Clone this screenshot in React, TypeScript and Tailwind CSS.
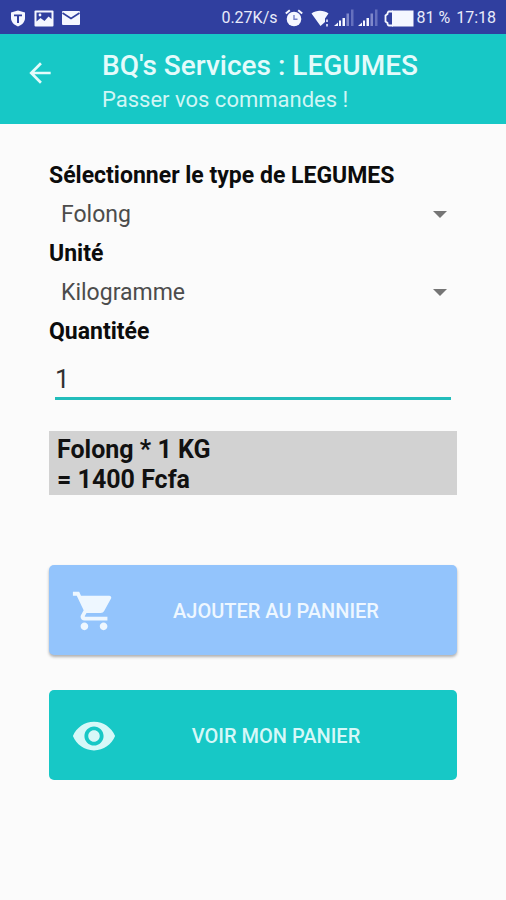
import { useState } from "react";
import type { ReactNode } from "react";

function ShieldIcon() {
  return (
    <svg viewBox="0 0 16 17" className="h-[17px] w-4" aria-hidden="true">
      <path d="M8 0.5L15 2.5V8C15 12 12 15 8 16.5C4 15 1 12 1 8V2.5Z" fill="#f5f7ff" />
      <path d="M4 4.5H12V6.3H9V13H7V6.3H4Z" fill="#303f9f" />
    </svg>
  );
}

function PictureIcon() {
  return (
    <svg viewBox="0 0 20 17" className="h-[17px] w-5" aria-hidden="true">
      <rect x="0.5" y="0.5" width="19" height="16" rx="1" fill="#f5f7ff" />
      <path d="M2.5 2.5H17.5V9L14.5 6.5L10.5 11L6.5 8L2.5 11.5Z" fill="#303f9f" />
      <circle cx="6" cy="5" r="1.4" fill="#f5f7ff" />
    </svg>
  );
}

function MailIcon() {
  return (
    <svg viewBox="0 0 18 14" className="h-3.5 w-[18px]" aria-hidden="true">
      <rect width="18" height="14" rx="1" fill="#f5f7ff" />
      <path d="M0.5 2L9 7.5L17.5 2" fill="none" stroke="#303f9f" strokeWidth="1.6" />
    </svg>
  );
}

function AlarmIcon() {
  return (
    <svg viewBox="0 0 18 18" className="size-[18px]" aria-hidden="true">
      <circle cx="9" cy="10" r="7.3" fill="#f5f7ff" />
      <path d="M0.8 4.6L4.8 1.2M17.2 4.6L13.2 1.2" stroke="#f5f7ff" strokeWidth="2" />
      <path d="M9 6V10.3H12.5" fill="none" stroke="#7682c8" strokeWidth="1.4" />
    </svg>
  );
}

function WifiIcon() {
  return (
    <svg viewBox="0 0 19 17" className="h-[17px] w-[19px]" aria-hidden="true">
      <path d="M0.5 3.5C5 -0.3 13 -0.3 17.5 3.5L14 8.5V12L9.5 16Z" fill="#f5f7ff" />
      <path d="M16 9.5V12M16 14V16.5" stroke="#c3c9ec" strokeWidth="2" />
    </svg>
  );
}

function SignalIcon() {
  return (
    <svg viewBox="0 0 20 18" className="h-[18px] w-5" aria-hidden="true">
      <path d="M0 17L4 13.5V17Z" fill="#f5f7ff" />
      <rect x="5" y="11.5" width="2" height="5.5" fill="#f5f7ff" />
      <rect x="8.5" y="9" width="2.5" height="8" fill="#f5f7ff" />
      <rect x="12.5" y="4.5" width="2.5" height="12.5" fill="#8089cb" />
      <rect x="17" y="0.5" width="2.5" height="16.5" fill="#6570be" />
    </svg>
  );
}

function BatteryIcon() {
  return (
    <svg viewBox="0 0 30 17" className="h-[17px] w-[30px]" aria-hidden="true">
      <path d="M9 1.5H5C4 1.5 3.5 3 3.5 4L1.5 5.5V11.5L3.5 13C3.5 14.5 4 15.5 5 15.5H9" fill="none" stroke="#f5f7ff" strokeWidth="1.8" />
      <rect x="8" y="0.5" width="21.5" height="16" fill="#f5f7ff" />
    </svg>
  );
}

function StatusBar() {
  return (
    <div className="flex h-[34px] items-center justify-between bg-[#303f9f] px-[10px] pt-0.5 text-base text-[#e8ebfa]">
      <div className="flex items-center gap-2">
        <ShieldIcon />
        <PictureIcon />
        <MailIcon />
      </div>
      <div className="flex items-center gap-[6px]">
        <div className="flex items-center gap-2">
          <span>0.27K/s</span>
          <AlarmIcon />
        </div>
        <div className="ml-0.5 flex items-center gap-1">
          <WifiIcon />
          <SignalIcon />
          <SignalIcon />
        </div>
        <div className="flex items-center gap-0.5">
          <BatteryIcon />
          <span>81 %</span>
        </div>
        <span>17:18</span>
      </div>
    </div>
  );
}

function Header() {
  return (
    <header className="flex h-[90px] bg-[#17c8c6]">
      <button type="button" aria-label="Retour" className="ml-6 flex h-[78px] w-8 items-center justify-center">
        <svg viewBox="0 0 24 24" className="size-8" fill="#e4fbfb" aria-hidden="true">
          <path d="M20 11H7.83l5.59-5.59L12 4l-8 8 8 8 1.41-1.41L7.83 13H20v-2z" />
        </svg>
      </button>
      <div className="ml-[46px] pt-[15px]">
        <h1 className="text-[28px] leading-[34px] font-medium text-[#e4fbfb]">BQ's Services : LEGUMES</h1>
        <p className="text-[22px] leading-[34px] text-[#d0f6f5]">Passer vos commandes !</p>
      </div>
    </header>
  );
}

function Label({ id, children }: { id: string; children: ReactNode }) {
  return (
    <label htmlFor={id} className="block text-[23px] leading-7 font-bold text-[#0c0c0c]">
      {children}
    </label>
  );
}

function Dropdown({ id, options }: { id: string; options: string[] }) {
  return (
    <div className="relative">
      <select id={id} className="block h-[50px] w-full appearance-none bg-transparent pr-10 pl-3 text-[23px] text-[#4c4c4c]">
        {options.map((option) => (
          <option key={option}>{option}</option>
        ))}
      </select>
      <svg viewBox="0 0 14 7" className="pointer-events-none absolute top-[21px] right-[10px] h-[7px] w-3.5" fill="#757575" aria-hidden="true">
        <path d="M0 0H14L7 7Z" />
      </svg>
    </div>
  );
}

function ActionButton({ icon, className, children }: { icon: string; className: string; children: ReactNode }) {
  return (
    <button type="button" className={`flex h-[90px] w-full items-center rounded-[5px] px-[22px] pt-0.5 text-xl font-medium ${className}`}>
      <svg viewBox="0 0 24 24" className="size-[46px] shrink-0 fill-current" aria-hidden="true">
        <path d={icon} />
      </svg>
      <span className="flex-1 text-center">{children}</span>
    </button>
  );
}

const CART =
  "M7 18c-1.1 0-1.99.9-1.99 2S5.9 22 7 22s2-.9 2-2-.9-2-2-2zM1 2v2h2l3.6 7.59-1.35 2.45c-.16.28-.25.61-.25.96 0 1.1.9 2 2 2h12v-2H7.42c-.14 0-.25-.11-.25-.25l.03-.12.9-1.63h7.45c.75 0 1.41-.41 1.75-1.03l3.58-6.49c.08-.14.12-.31.12-.48 0-.55-.45-1-1-1H5.21l-.94-2H1zm16 16c-1.1 0-1.99.9-1.99 2s.89 2 1.99 2 2-.9 2-2-.9-2-2-2z";
const EYE =
  "M12 4.5C7 4.5 2.73 7.61 1 12c1.73 4.39 6 7.5 11 7.5s9.27-3.11 11-7.5c-1.73-4.39-6-7.5-11-7.5zM12 17c-2.76 0-5-2.24-5-5s2.24-5 5-5 5 2.24 5 5-2.24 5-5 5zm0-8c-1.66 0-3 1.34-3 3s1.34 3 3 3 3-1.34 3-3-1.34-3-3-3z";

export default function App() {
  const [quantity, setQuantity] = useState("1");

  return (
    <div className="min-h-screen bg-[#fbfbfb] font-[Roboto,sans-serif]">
      <StatusBar />
      <Header />
      <main className="px-[49px] pt-[38px] pb-10">
        <Label id="type">Sélectionner le type de LEGUMES</Label>
        <Dropdown id="type" options={["Folong"]} />
        <Label id="unit">Unité</Label>
        <Dropdown id="unit" options={["Kilogramme"]} />
        <Label id="quantity">Quantitée</Label>
        <div className="px-[6px] pt-3">
          <input
            id="quantity"
            type="text"
            inputMode="numeric"
            value={quantity}
            onChange={(event) => setQuantity(event.target.value)}
            className="block h-[42px] w-full border-b-3 border-[#22bdbb] bg-transparent pt-0.5 text-[26px] text-[#303030] outline-none"
          />
        </div>
        <output htmlFor="type unit quantity" className="mt-[31px] block bg-[#d2d2d2] px-2 pt-1 text-[25px] leading-[30px] font-bold text-[#111111]">
          Folong * {quantity} KG
          <br />= {Number(quantity) * 1400} Fcfa
        </output>
        <div className="mt-[70px] flex flex-col gap-[35px]">
          <ActionButton icon={CART} className="bg-[#93c4fc] text-[#eef7ff] shadow-[0_2px_3px_rgba(0,0,0,0.3)]">
            AJOUTER AU PANNIER
          </ActionButton>
          <ActionButton icon={EYE} className="bg-[#17c8c6] text-[#d6f8f8]">
            VOIR MON PANIER
          </ActionButton>
        </div>
      </main>
    </div>
  );
}
